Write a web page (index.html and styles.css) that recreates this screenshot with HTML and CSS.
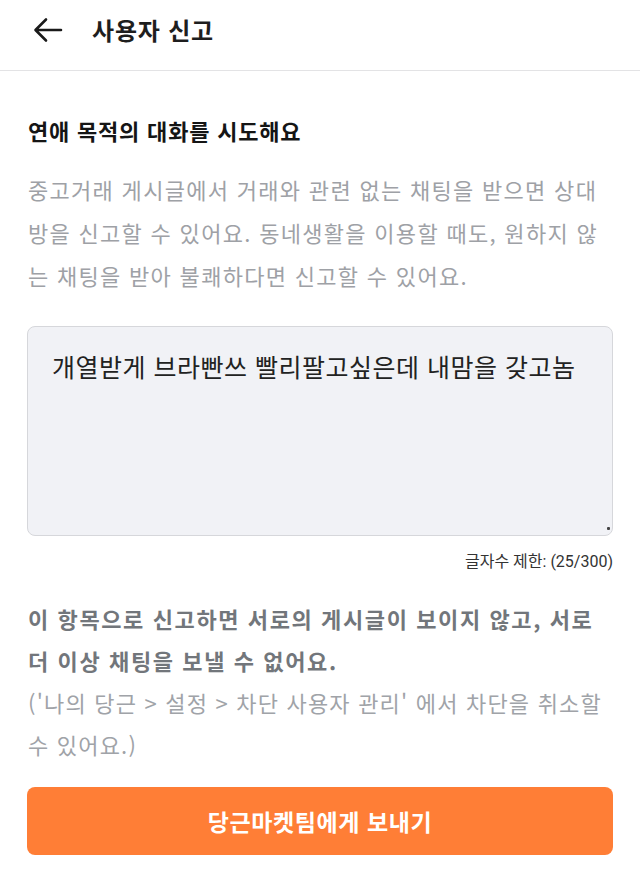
FILE: index.html
```html
<!DOCTYPE html>
<html lang="ko">
<head>
<meta charset="utf-8">
<link rel="stylesheet" href="styles.css">
</head>
<body>
<header class="topbar">
  <svg class="back" width="30" height="26" viewBox="0 0 30 26">
    <path d="M28 13H3M13 2.5L2.5 13L13 23.5" fill="none" stroke="#1a1a1a" stroke-width="2.6" stroke-linecap="round" stroke-linejoin="round"/>
  </svg>
  <h1 class="title">사용자 신고</h1>
</header>
<main class="content">
  <h2 class="reason">연애 목적의 대화를 시도해요</h2>
  <p class="desc">중고거래 게시글에서 거래와 관련 없는 채팅을 받으면 상대방을 신고할 수 있어요. 동네생활을 이용할 때도, 원하지 않는 채팅을 받아 불쾌하다면 신고할 수 있어요.</p>
  <div class="textbox">
    <div class="textbox-text">개열받게 브라빤쓰 빨리팔고싶은데 내맘을 갖고놈</div>
    <span class="grip"></span>
  </div>
  <div class="counter">글자수 제한: (25/300)</div>
  <p class="notice"><strong class="notice-strong">이 항목으로 신고하면 서로의 게시글이 보이지 않고, 서로 더 이상 채팅을 보낼 수 없어요.</strong><br>('나의 당근 &gt; 설정 &gt; 차단 사용자 관리' 에서 차단을 취소할 수 있어요.)</p>
  <button class="submit">당근마켓팀에게 보내기</button>
</main>
</body>
</html>
```

FILE: styles.css
```css
html, body {
  margin: 0;
  padding: 0;
  background: #ffffff;
}
body {
  font-family: "Noto Sans CJK KR", "Noto Sans", sans-serif;
  color: #1a1a1a;
}
.topbar {
  height: 71px;
  display: flex;
  align-items: flex-start;
  padding-left: 33px;
  padding-top: 14px;
  border-bottom: 1px solid #e3e3e5;
  box-sizing: border-box;
}
.back {
  display: block;
  margin-right: 29px;
  margin-top: 3px;
}
.title {
  margin: 0;
  font-size: 24px;
  line-height: 32px;
  font-weight: 700;
  letter-spacing: 0.8px;
  color: #1e1e1e;
}
.content {
  padding: 0 27px;
}
.reason {
  margin: 43px 0 0 1px;
  font-size: 22px;
  font-weight: 700;
  letter-spacing: 0.8px;
  line-height: 32px;
  color: #151515;
}
.desc {
  margin: 22px 0 0 1px;
  font-size: 22px;
  line-height: 43px;
  letter-spacing: 1.3px;
  color: #9ea1a6;
  word-break: break-all;
}
.textbox {
  position: relative;
  margin-top: 29px;
  height: 210px;
  background: #f1f2f6;
  border: 1px solid #d6d7db;
  border-radius: 8px;
  box-sizing: border-box;
  padding: 21px 24px;
}
.textbox-text {
  font-size: 25px;
  line-height: 36px;
  color: #222222;
  letter-spacing: 0.5px;
}
.grip {
  position: absolute;
  right: 2px;
  bottom: 5px;
  width: 3px;
  height: 3px;
  background: #444;
  border-radius: 1px;
}
.counter {
  margin-top: 15px;
  text-align: right;
  font-family: "Roboto", "Noto Sans CJK KR", sans-serif;
  font-size: 16px;
  line-height: 22px;
  color: #333333;
}
.notice {
  margin: 24px 0 0 1px;
  font-size: 22px;
  line-height: 42px;
  letter-spacing: 1.2px;
  color: #a0a3a8;
}
.notice-strong {
  font-weight: 700;
  letter-spacing: 1.6px;
  color: #72767b;
}
.submit {
  display: block;
  width: 100%;
  margin-top: 22px;
  height: 68px;
  border: none;
  border-radius: 8px;
  background: #ff7e36;
  color: #ffffff;
  font-family: "Noto Sans CJK KR", sans-serif;
  font-size: 23px;
  font-weight: 700;
  letter-spacing: 0.6px;
}
```
